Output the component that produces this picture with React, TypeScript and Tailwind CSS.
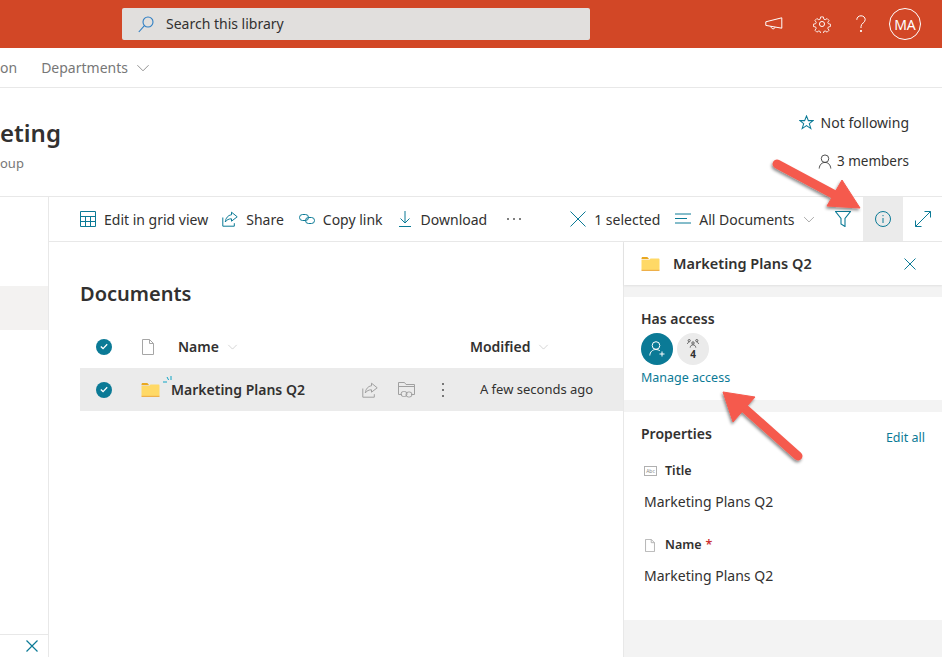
const teal = "#038387";

const Chevron = ({ className }: { className: string }) => (
  <svg viewBox="0 0 16 10" className={className} fill="none" stroke="currentColor" strokeWidth="1">
    <path d="M1 1.5 8 8.5 15 1.5" />
  </svg>
);

const DocIcon = ({ className }: { className: string }) => (
  <svg viewBox="0 0 14 16" className={className} fill="none" stroke="#a6a6a6" strokeWidth="1">
    <path d="M1.5.5h7l4 4v11h-11zM8.5.5v4h4" />
  </svg>
);

const Folder = ({ className }: { className: string }) => (
  <svg viewBox="0 0 18 14" className={className}>
    <path d="M0 1.5C0 .7.5 0 1.2 0h4.6l2 2.2H0z" fill="#e9a820" />
    <path d="M0 3h7.5l1.5-1.4h8c.6 0 1 .4 1 1V13H0z" fill="#ffd966" />
    <rect x="0" y="12.8" width="18" height="1.2" fill="#eeb04a" />
  </svg>
);

const Check = () => (
  <div className="flex h-4 w-4 items-center justify-center rounded-full bg-[#0b7a96]">
    <svg viewBox="0 0 10 8" className="w-2 h-[7px]" fill="none" stroke="#fff" strokeWidth="1.6">
      <path d="M1 4 3.8 6.6 9 1.2" />
    </svg>
  </div>
);

const ShareIcon = ({ color, className }: { color: string; className: string }) => (
  <svg viewBox="0 0 16 16" className={className} fill="none" stroke={color} strokeWidth="1">
    <path d="M.8 6.5v8.7h11.5v-3" />
    <path d="M9.5 1.2 15.2 5.8 9.5 10.2V7.8C7 7.8 4.7 8.7 3.3 11 3.6 7.2 6 4.2 9.5 3.8z" />
  </svg>
);

const App = () => {
  return (
    <div
      className="relative flex h-[657px] w-[942px] flex-col overflow-hidden bg-white text-[14px] text-[#323130]"
      style={{ fontFamily: '"Noto Sans", "Open Sans", sans-serif' }}
    >
      {/* suite bar */}
      <div className="flex h-12 shrink-0 items-center bg-[#d24726] pl-[122px]">
        <div className="flex h-8 w-[468px] items-center rounded-[2px] bg-[#e1dfdd] pl-4">
          <svg viewBox="0 0 16 17" className="h-[17px] w-4" fill="none" stroke="#2f7fc4" strokeWidth="1.1">
            <circle cx="10" cy="6" r="5" />
            <path d="M6.4 9.6.8 16" />
          </svg>
          <span className="ml-[12px] text-[14px] leading-5">Search this library</span>
        </div>
        <svg viewBox="0 0 18 14" className="ml-[175px] h-[14px] w-[18px]" fill="none" stroke="#fff" strokeWidth="1">
          <path d="M.8 4.8 16.8.8v10.4L.8 8.4zM6 9.4c0 3 3.8 3.2 4 .8" />
        </svg>
        <svg viewBox="0 0 24 24" className="ml-[30px] h-[18px] w-[18px]" fill="none" stroke="#fff" strokeWidth="1.3">
          <circle cx="12" cy="12" r="3.4" />
          <path d="M10 1.5h4l.7 3.3 2 .9 2.9-1.8 2.8 2.8-1.8 2.9.8 2 3.1.7v3.4l-3.1.7-.8 2 1.8 2.9-2.8 2.8-2.9-1.8-2 .8-.7 3.1h-4l-.7-3.1-2-.8-2.9 1.8-2.8-2.8 1.8-2.9-.8-2-3.3-.7v-3.4l3.3-.7.8-2-1.8-2.9 2.8-2.8 2.9 1.8 2-.9z" transform="translate(1.2 1.2) scale(.9)" />
        </svg>
        <svg viewBox="0 0 10 18" className="ml-[25px] h-[18px] w-[10px]" fill="none" stroke="#fff" strokeWidth="1">
          <path d="M.8 4.8C.8 2.4 2.6.8 5 .8s4.2 1.6 4.2 3.8C9.2 8 5 8 5 11.6v1.4" />
          <circle cx="5" cy="16" r=".7" fill="#fff" />
        </svg>
        <div className="ml-[23px] flex h-8 w-8 items-center justify-center rounded-full border border-white text-[14px] text-white">
          MA
        </div>
      </div>

      {/* site nav */}
      <div className="flex h-10 shrink-0 items-center border-b border-[#e8e8e8] text-[#777]">
        <span>on</span>
        <span className="ml-6">Departments</span>
        <Chevron className="ml-2 h-[8px] w-[14px]" />
      </div>

      {/* site title */}
      <div className="flex h-[109px] shrink-0 justify-between border-b border-[#e8e8e8]">
        <div className="pt-[29px]">
          <div className="text-[24px] font-semibold leading-8">eting</div>
          <div className="mt-[4px] text-[13px] leading-5 text-[#777]">oup</div>
        </div>
        <div className="flex flex-col items-end pr-[33px] pt-[24px]">
          <div className="flex h-5 items-center">
            <svg viewBox="0 0 16 16" className="h-[15px] w-[15px]" fill="none" stroke="#0b7a96" strokeWidth="1.1">
              <path d="M8 1 10 6h5l-4 3.3 1.6 5.2L8 11.4l-4.6 3.1L5 9.3 1 6h5z" />
            </svg>
            <span className="ml-[7px]">Not following</span>
          </div>
          <div className="mt-[19px] flex h-5 items-center text-[13.5px]">
            <svg viewBox="0 0 14 16" className="h-[15px] w-[14px]" fill="none" stroke="#444" strokeWidth="1">
              <circle cx="7" cy="5" r="4" />
              <path d="M.8 15.5C1.2 11.5 3.5 9 7 9s5.8 2.5 6.2 6.5" />
            </svg>
            <span className="ml-[5px]">3 members</span>
          </div>
        </div>
      </div>

      <div className="flex min-h-0 flex-1">
        {/* left rail */}
        <div className="flex w-[49px] shrink-0 flex-col border-r border-[#e8e8e8]">
          <div className="mt-[89px] h-11 bg-[#f3f2f1]" />
          <div className="mt-auto flex h-[23px] items-center justify-end border-t border-[#e8e8e8] pr-[10px]">
            <svg viewBox="0 0 12 12" className="h-3 w-3" fill="none" stroke="#0b7a96" strokeWidth="1.2">
              <path d="M.5.5l11 11M11.5.5l-11 11" />
            </svg>
          </div>
        </div>

        <div className="flex min-w-0 flex-1 flex-col">
          {/* command bar */}
          <div className="flex h-[45px] shrink-0 items-center border-b border-[#e8e8e8]">
            <svg viewBox="0 0 16 16" className="ml-[31px] h-4 w-4" fill="none" stroke="#0b7a96" strokeWidth="1">
              <path d="M.5.5h15v15H.5zM.5 5.5h15M.5 10.5h15M5.5 5.5v10M10.5 5.5v10" />
            </svg>
            <span className="ml-2">Edit in grid view</span>
            <ShareIcon color="#0b7a96" className="ml-[14px] h-4 w-4" />
            <span className="ml-2">Share</span>
            <svg viewBox="0 0 16 12" className="ml-[15px] h-3 w-4" fill="none" stroke="#0b7a96" strokeWidth="1">
              <rect x=".5" y="1.5" width="9" height="6" rx="3" />
              <rect x="6.5" y="4.5" width="9" height="6" rx="3" />
            </svg>
            <span className="ml-2">Copy link</span>
            <svg viewBox="0 0 14 16" className="ml-[15px] h-4 w-[14px]" fill="none" stroke="#0b7a96" strokeWidth="1">
              <path d="M7 0v12M2.5 7.5 7 12l4.5-4.5M1 15.5h12" />
            </svg>
            <span className="ml-[9px]">Download</span>
            <span className="ml-5 flex gap-[4px]">
              <i className="h-[2px] w-[2px] rounded-full bg-[#555]" />
              <i className="h-[2px] w-[2px] rounded-full bg-[#555]" />
              <i className="h-[2px] w-[2px] rounded-full bg-[#555]" />
            </span>
            <svg viewBox="0 0 16 16" className="ml-[49px] h-4 w-4" fill="none" stroke="#0b7a96" strokeWidth="1">
              <path d="M.5.5l15 15M15.5.5l-15 15" />
            </svg>
            <span className="ml-2">1 selected</span>
            <svg viewBox="0 0 16 12" className="ml-[15px] h-3 w-4" fill="none" stroke="#0b7a96" strokeWidth="1">
              <path d="M0 1h16M0 5.5h12M0 10h16" />
            </svg>
            <span className="ml-2">All Documents</span>
            <Chevron className="ml-2 h-[7px] w-3 text-[#888]" />
            <svg viewBox="0 0 16 16" className="ml-5 h-4 w-4" fill="none" stroke="#0b7a96" strokeWidth="1.1">
              <path d="M.5.5h15L10 7.5v8l-4-2.5V7.5zM.5.5" />
            </svg>
            <div className="ml-3 flex h-full w-10 items-center justify-center bg-[#ebebeb]">
              <svg viewBox="0 0 16 16" className="h-4 w-4" fill="none" stroke="#0b7a96" strokeWidth="1">
                <circle cx="8" cy="8" r="7.5" />
                <path d="M8 7v5M8 4v1.2" />
              </svg>
            </div>
            <svg viewBox="0 0 16 16" className="ml-3 h-4 w-4" fill="none" stroke="#0b7a96" strokeWidth="1">
              <path d="M.5 15.5l15-15M9.5.5h6v6M.5 9.5v6h6" />
            </svg>
          </div>

          <div className="flex min-h-0 flex-1">
            {/* documents list */}
            <div className="w-[574px] shrink-0 pl-[31px] pt-[38px]">
              <div className="text-[20px] font-semibold leading-7">Documents</div>
              <div className="mt-[17px] flex h-[43px] items-center font-semibold">
                <div className="ml-4"><Check /></div>
                <DocIcon className="ml-[29px] h-4 w-[14px]" />
                <span className="ml-[23px]">Name</span>
                <Chevron className="ml-[8px] h-[6px] w-[11px] text-[#bbb]" />
                <span className="ml-[232px]">Modified</span>
                <Chevron className="ml-[8px] h-[6px] w-[11px] text-[#bbb]" />
              </div>
              <div className="flex h-[43px] items-center bg-[#ebebeb]">
                <div className="ml-4"><Check /></div>
                <Folder className="ml-[29px] h-[14px] w-[19px]" />
                <div className="relative ml-[11px] font-semibold">
                  <svg viewBox="0 0 9 9" className="absolute -left-[8px] -top-[3px] h-[9px] w-[9px]" fill="none" stroke="#0ea5c6" strokeWidth="1">
                    <path d="M8 0v4M4 1l1.6 3M0 6h4" />
                  </svg>
                  Marketing Plans Q2
                </div>
                <ShareIcon color="#a0a0a0" className="ml-[57px] h-4 w-4" />
                <svg viewBox="0 0 17 16" className="ml-[20px] h-4 w-[17px]" fill="none" stroke="#a0a0a0" strokeWidth="1">
                  <path d="M4 12.5H.5V.5h6l1.5 2h8.5v10H13M.5 4.5h16" />
                  <rect x="3" y="9.5" width="6" height="5" rx="2.5" />
                  <rect x="8" y="10" width="6" height="5" rx="2.5" />
                </svg>
                <span className="ml-[27px] flex flex-col gap-[4px]">
                  <i className="h-[2px] w-[2px] bg-[#777]" />
                  <i className="h-[2px] w-[2px] bg-[#777]" />
                  <i className="h-[2px] w-[2px] bg-[#777]" />
                </span>
                <span className="ml-[36px] text-[13px]">A few seconds ago</span>
              </div>
            </div>

            {/* details pane */}
            <div className="flex min-w-0 flex-1 flex-col bg-[#f3f3f3] border-l border-[#e8e8e8]">
              <div className="flex h-[43px] shrink-0 items-center bg-white pl-[17px] pr-[26px] shadow-[0_1px_2px_rgba(0,0,0,0.08)]">
                <Folder className="h-[14px] w-[19px]" />
                <span className="ml-[13px] font-semibold text-[14.5px]">Marketing Plans Q2</span>
                <svg viewBox="0 0 12 12" className="ml-auto h-3 w-3" fill="none" stroke="#0b7a96" strokeWidth="1">
                  <path d="M.5.5l11 11M11.5.5l-11 11" />
                </svg>
              </div>

              <div className="mt-3 h-[103px] shrink-0 bg-white pl-[17px] pt-[12px]">
                <div className="font-semibold leading-5">Has access</div>
                <div className="mt-[4px] flex gap-1">
                  <div className="flex h-8 w-8 items-center justify-center rounded-full bg-[#0b7a96]">
                    <svg viewBox="0 0 16 16" className="h-4 w-4" fill="none" stroke="#fff" strokeWidth="1">
                      <circle cx="7" cy="4.5" r="3.8" />
                      <path d="M.8 14.5C1 10.8 3.5 8.5 7 8.5c1.5 0 2.8.4 3.8 1.2M13 10.5v5M10.5 13h5" />
                    </svg>
                  </div>
                  <div className="flex h-8 w-8 flex-col items-center justify-center rounded-full bg-[#ebebeb]">
                    <svg viewBox="0 0 12 9" className="h-[9px] w-3" fill="none" stroke="#555" strokeWidth=".9">
                      <circle cx="2.2" cy="1.6" r="1.1" />
                      <circle cx="9.8" cy="1.6" r="1.1" />
                      <circle cx="6" cy="4" r="1.2" />
                      <path d="M3.2 8.6C3.4 6.8 4.5 5.8 6 5.8s2.6 1 2.8 2.8M.4 5c.2-1.2 1-1.9 1.8-1.9M11.6 5c-.2-1.2-1-1.9-1.8-1.9" />
                    </svg>
                    <span className="text-[10px] font-bold leading-3">4</span>
                  </div>
                </div>
                <div className="mt-[3px] text-[12.5px] leading-5 text-[#0b7a96]">Manage access</div>
              </div>

              <div className="mt-3 h-[208px] shrink-0 bg-white px-[17px] pt-[12px]">
                <div className="flex items-start justify-between pr-0">
                  <span className="font-semibold leading-5">Properties</span>
                  <span className="mr-[0px] mt-[4px] text-[12.5px] leading-5 text-[#0b7a96]">Edit all</span>
                </div>
                <div className="mt-[13px] flex h-5 items-center pl-[3px] text-[12.5px] font-semibold">
                  <div className="flex h-[10px] w-[13px] items-center justify-center border border-[#b0b0b0] text-[5px] font-normal leading-none text-[#888]">Abc</div>
                  <span className="ml-[8px]">Title</span>
                </div>
                <div className="mt-[11px] pl-[3px] leading-5">Marketing Plans Q2</div>
                <div className="mt-[23px] flex h-5 items-center pl-[3px] text-[12.5px] font-semibold">
                  <DocIcon className="h-[13px] w-[12px]" />
                  <span className="ml-[9px]">Name</span>
                  <span className="ml-1 text-[#c33]">*</span>
                </div>
                <div className="mt-[11px] pl-[3px] leading-5">Marketing Plans Q2</div>
              </div>
            </div>
          </div>
        </div>
      </div>

      {/* callout arrows */}
      <svg viewBox="0 0 942 657" className="pointer-events-none absolute left-0 top-0 h-[657px] w-[942px]">
        <defs>
          <filter id="sh" x="-20%" y="-20%" width="140%" height="140%">
            <feDropShadow dx="-1" dy="2" stdDeviation="1.5" floodColor="#000" floodOpacity="0.45" />
          </filter>
        </defs>
        <g filter="url(#sh)" fill="#f55a4e" stroke="#f55a4e">
          <path d="M777 164 835 195" strokeWidth="9" strokeLinecap="round" />
          <path d="M842 180 860 208 827 206z" strokeWidth="1" />
          <path d="M798 456 744 408" strokeWidth="9" strokeLinecap="round" />
          <path d="M723 392 755 397 733 422z" strokeWidth="1" />
        </g>
      </svg>
      <span className="hidden" style={{ color: teal }} />
    </div>
  );
};

export default App;
